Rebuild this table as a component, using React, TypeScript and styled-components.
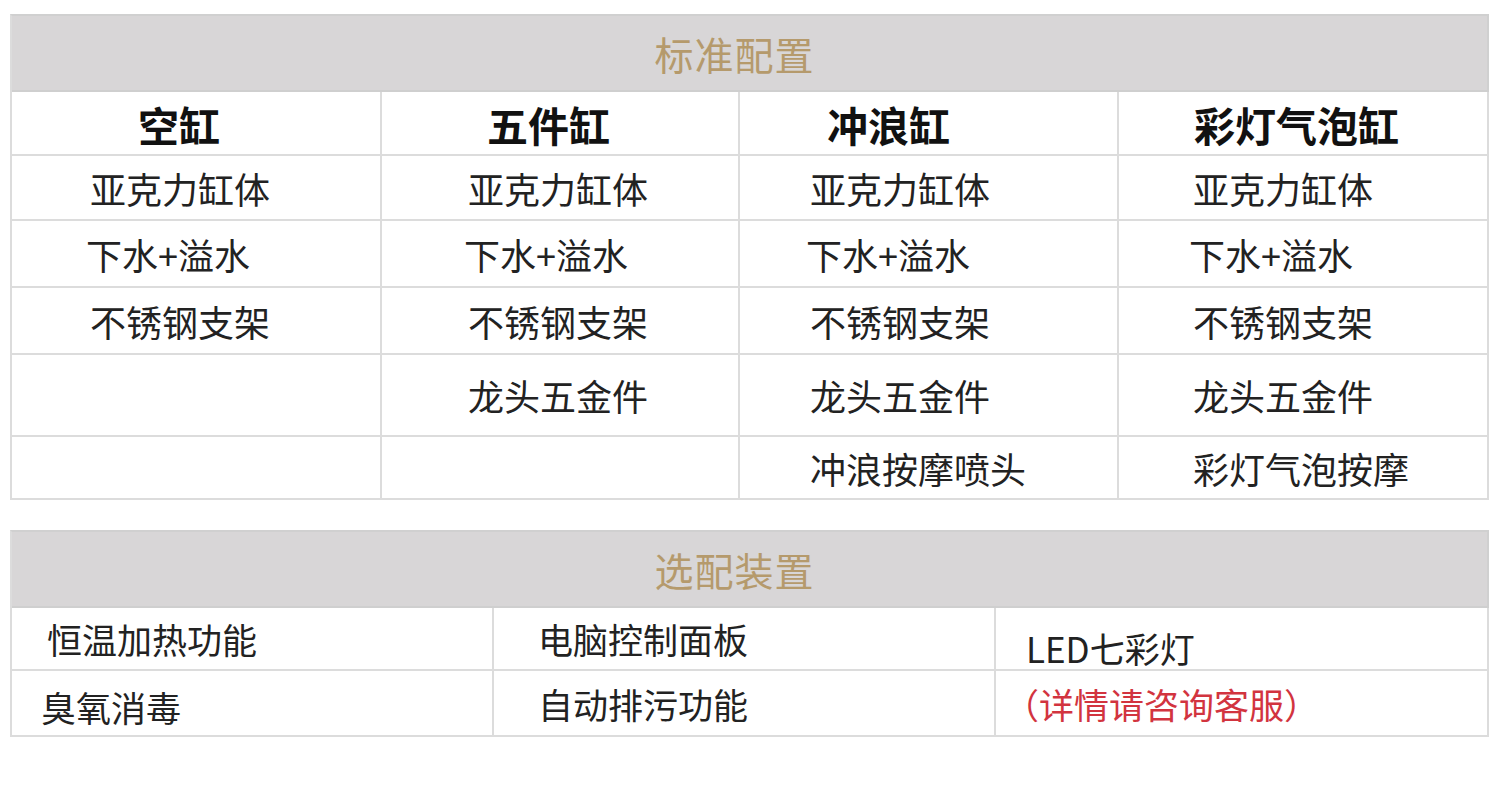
import React from 'react'
import styled, { createGlobalStyle } from 'styled-components'

const GlobalStyle = createGlobalStyle`
  html, body {
    margin: 0;
    padding: 0;
    background: #ffffff;
  }
  body {
    font-family: "Noto Sans CJK SC", "Noto Sans", sans-serif;
    color: #222;
  }
`;

const Page = styled.div`
  width: 1500px;
  height: 793px;
  box-sizing: border-box;
  padding: 14px 11px 0 10px;
  display: flex;
  flex-direction: column;
  gap: 30px;
`;

const Table = styled.div<{ $cols: string; $rows: string }>`
  display: grid;
  grid-template-columns: ${p => p.$cols};
  grid-template-rows: ${p => p.$rows};
  border-left: 2px solid #dcdcdc;
  border-top: 2px solid #d0d0d0;
`;

const TitleBar = styled.div`
  grid-column: 1 / -1;
  background: #d8d6d7;
  border-right: 2px solid #d0d0d0;
  border-bottom: 2px solid #cfcfcf;
  display: flex;
  align-items: center;
  justify-content: center;
  font-size: 39px;
  color: #b59a6c;
  letter-spacing: 1px;
  padding-right: 30px;
`;

const Cell = styled.div<{ $indent: number; $shift?: number; $size: number; $head?: boolean; $red?: boolean }>`
  box-sizing: border-box;
  border-right: 2px solid #dcdcdc;
  border-bottom: 2px solid #dcdcdc;
  display: flex;
  align-items: center;
  padding-left: ${p => p.$indent}px;
  padding-top: ${p => p.$shift ?? 0}px;
  font-size: ${p => p.$size}px;
  font-weight: ${p => (p.$head ? 700 : 400)};
  color: ${p => (p.$red ? '#d2343f' : p.$head ? '#111' : '#222')};
  white-space: nowrap;
  line-height: 1;
`;

const heads = ['空缸', '五件缸', '冲浪缸', '彩灯气泡缸'];
const headIndent = [126, 105, 87, 75];
const bodyIndent = [78, 86, 70, 74];

const standard = [
  ['亚克力缸体', '亚克力缸体', '亚克力缸体', '亚克力缸体'],
  ['下水+溢水', '下水+溢水', '下水+溢水', '下水+溢水'],
  ['不锈钢支架', '不锈钢支架', '不锈钢支架', '不锈钢支架'],
  ['', '龙头五金件', '龙头五金件', '龙头五金件'],
  ['', '', '冲浪按摩喷头', '彩灯气泡按摩'],
];

const optional = [
  [
    { text: '恒温加热功能', indent: 35, shift: 0 },
    { text: '电脑控制面板', indent: 44, shift: 0 },
    { text: 'LED七彩灯', indent: 30, shift: 18 },
  ],
  [
    { text: '臭氧消毒', indent: 29, shift: 6 },
    { text: '自动排污功能', indent: 44, shift: 0 },
    { text: '（详情请咨询客服）', indent: 8, shift: 0, red: true },
  ],
];

const App = () => {
  return (
    <Page>
      <GlobalStyle />
      <Table $cols="370px 358px 379px 370px" $rows="76px 64px 65px 67px 67px 82px 63px">
        <TitleBar>标准配置</TitleBar>
        {heads.map((h, i) => (
          <Cell key={h} $head $size={41} $indent={headIndent[i]} $shift={2}>{h}</Cell>
        ))}
        {standard.map((row, r) =>
          row.map((t, c) => (
            <Cell
              key={`${r}-${c}`}
              $size={36}
              $indent={bodyIndent[c] - (r === 1 ? 4 : 0)}
              $shift={r === 4 ? 0 : -4}
            >
              {t}
            </Cell>
          ))
        )}
      </Table>
      <Table $cols="482px 502px 493px" $rows="76px 63px 66px">
        <TitleBar>选配装置</TitleBar>
        {optional.map((row, r) =>
          row.map((cell, c) => (
            <Cell key={`${r}-${c}`} $size={35} $indent={cell.indent} $shift={cell.shift} $red={cell.red}>
              {cell.text}
            </Cell>
          ))
        )}
      </Table>
    </Page>
  )
}

export default App
